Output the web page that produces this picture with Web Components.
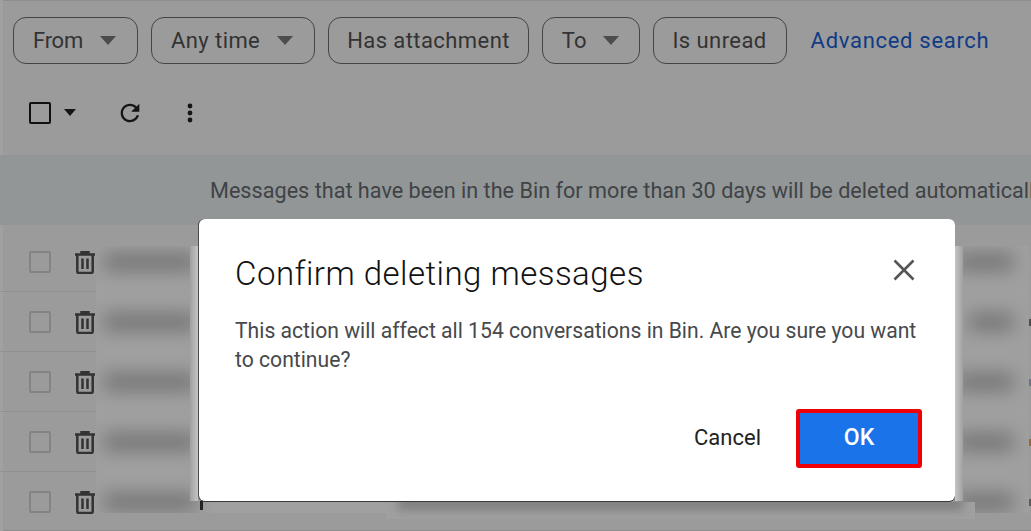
<!DOCTYPE html>
<html>
<head>
<meta charset="utf-8">
<title>Confirm deleting messages</title>
<style>
  html, body { margin: 0; padding: 0; height: 100%; overflow: hidden; background: #9b9b9b; }
</style>
</head>
<body>
<mail-page>
  <filter-bar>
    <filter-chip caret style="letter-spacing:-0.25px">From</filter-chip>
    <filter-chip caret>Any time</filter-chip>
    <filter-chip>Has attachment</filter-chip>
    <filter-chip caret style="letter-spacing:0;padding-right:20px">To</filter-chip>
    <filter-chip style="padding-right:19px">Is unread</filter-chip>
  </filter-bar>
  <mail-toolbar></mail-toolbar>
  <bin-banner>Messages that have been in the Bin for more than 30 days will be deleted automatically</bin-banner>
  <mail-row first></mail-row>
  <mail-row bit="#4a4a4a" narrow="44"></mail-row>
  <mail-row bit="#6b7280"></mail-row>
  <mail-row bit="#8c6a3c"></mail-row>
  <mail-row last bit="#5a5a5a"></mail-row>
  <confirm-dialog heading="Confirm deleting messages">
    This action will affect all 154 conversations in Bin. Are you sure you want to continue?
  </confirm-dialog>
</mail-page>

<script>
const FONT = 'Roboto, "Liberation Sans", sans-serif';

class MailPage extends HTMLElement {
    constructor() {
        super();
        this.attachShadow({ mode: 'open' });
        this.shadowRoot.innerHTML = `
            <style>
                :host {
                    display: block;
                    position: relative;
                    width: 1031px;
                    height: 531px;
                    overflow: hidden;
                    background: #9b9b9b;
                    box-shadow: inset 3px 0 0 #a1a1a4, inset 0 1px 0 #8e8e8e, inset 0 -1px 0 #8e8e8e;
                    font-family: ${FONT};
                }
            </style>
            <slot></slot>
        `;
    }
}

class FilterBar extends HTMLElement {
    constructor() {
        super();
        this.attachShadow({ mode: 'open' });
        this.shadowRoot.innerHTML = `
            <style>
                :host { display: flex; gap: 13px; align-items: center; padding: 17px 0 0 13px; height: 47px; }
                a { margin-left: 11px; color: #0f3a85; font-size: 22px; letter-spacing: 0.7px; text-decoration: none; }
            </style>
            <slot></slot>
            <a>Advanced search</a>
        `;
    }
}

class FilterChip extends HTMLElement {
    constructor() {
        super();
        this.attachShadow({ mode: 'open' });
        const caret = this.hasAttribute('caret')
            ? '<svg width="16" height="9" viewBox="0 0 16 9"><path d="M0 0h16L8 9z" fill="#4c4c4c"/></svg>'
            : '';
        this.shadowRoot.innerHTML = `
            <style>
                :host {
                    display: flex;
                    align-items: center;
                    gap: 17px;
                    box-sizing: border-box;
                    height: 47px;
                    padding: 0 18px;
                    border: 1px solid #454545;
                    border-radius: 13px;
                    color: #333;
                    font-size: 22px;
                    letter-spacing: 0.42px;
                    white-space: nowrap;
                }
                :host([caret]) { padding: 0 21px 0 19px; }
            </style>
            <slot></slot>${caret}
        `;
    }
}

class MailToolbar extends HTMLElement {
    constructor() {
        super();
        this.attachShadow({ mode: 'open' });
        this.shadowRoot.innerHTML = `
            <style>
                :host { display: flex; align-items: center; height: 91px; padding-left: 29px; box-sizing: border-box; padding-top: 6px; }
                .box { box-sizing: border-box; width: 22px; height: 22px; border: 2.5px solid #111; border-radius: 2px; }
                svg { display: block; }
            </style>
            <div class="box"></div>
            <svg style="margin-left:13px" width="12" height="7" viewBox="0 0 12 7"><path d="M0 0h12L6 7z" fill="#151515"/></svg>
            <svg style="margin-left:40px" width="28" height="28" viewBox="0 0 24 24"><path fill="#151515" d="M17.65 6.35C16.2 4.9 14.21 4 12 4c-4.42 0-7.99 3.58-7.99 8s3.57 8 7.99 8c3.73 0 6.84-2.55 7.73-6h-2.08c-.82 2.33-3.04 4-5.65 4-3.31 0-6-2.69-6-6s2.69-6 6-6c1.66 0 3.14.69 4.22 1.78L13 11h7V4l-2.35 2.35z"/></svg>
            <svg style="margin-left:43px" width="6" height="20" viewBox="0 0 6 20"><circle cx="3" cy="3" r="2.4" fill="#151515"/><circle cx="3" cy="10" r="2.4" fill="#151515"/><circle cx="3" cy="17" r="2.4" fill="#151515"/></svg>
        `;
    }
}

class BinBanner extends HTMLElement {
    constructor() {
        super();
        this.attachShadow({ mode: 'open' });
        this.shadowRoot.innerHTML = `
            <style>
                :host {
                    display: flex;
                    align-items: center;
                    box-sizing: border-box;
                    height: 70px;
                    padding: 1px 0 0 210px;
                    background: #929696;
                    color: #3f4346;
                    font-size: 21.65px;
                    white-space: nowrap;
                    overflow: hidden;
                }
            </style>
            <slot></slot>
        `;
    }
}

class MailRow extends HTMLElement {
    constructor() {
        super();
        this.attachShadow({ mode: 'open' });
        const bit = this.getAttribute('bit');
        const narrow = this.getAttribute('narrow') || 56;
        this.shadowRoot.innerHTML = `
            <style>
                :host { display: flex; height: 60px; }
                :host([first]) { margin-top: 7px; }
                .lead {
                    display: flex;
                    align-items: center;
                    gap: 24px;
                    flex: none;
                    box-sizing: border-box;
                    width: 96px;
                    padding: 1px 0 0 29px;
                    border-bottom: 1px solid #909090;
                }
                .box { box-sizing: border-box; width: 22px; height: 22px; border: 2px solid #838383; border-radius: 2px; }
                .patch { flex: 1; display: flex; justify-content: space-between; align-items: center; background: #a0a0a0; overflow: hidden; padding: 0 6px 0 8px; }
                :host([first]) .patch { margin-top: 14px; }
                :host([last]) .patch { margin-bottom: 19px; }
                .smear { height: 18px; background: #757575; filter: blur(9px); }
                .left { width: 92px; }
                .right { width: ${narrow}px; margin-right: 10px; }
                :host([first]) .smear { transform: translateY(-7px); }
                :host([last]) .smear { transform: translateY(9px); }
                .bit { flex: none; width: 2px; height: 7px; align-self: center; }
                svg { display: block; flex: none; }
            </style>
            <div class="lead">
                <div class="box"></div>
                <svg width="20" height="23" viewBox="0 0 20 23" fill="none" stroke="#333" stroke-width="2.5">
                    <path d="M0 3.4h20M6.5 3V1.2h7V3" />
                    <path d="M2.3 4v16.6a1.4 1.4 0 0 0 1.4 1.3h12.6a1.4 1.4 0 0 0 1.4-1.3V4" />
                    <path d="M7.5 7.5v10.5M12.5 7.5v10.5" />
                </svg>
            </div>
            <div class="patch">
                <div class="smear left"></div>
                <div class="smear right"></div>
            </div>
            <div class="bit" style="background:${bit || 'transparent'}"></div>
        `;
    }
}

class ConfirmDialog extends HTMLElement {
    constructor() {
        super();
        this.attachShadow({ mode: 'open' });
        this.shadowRoot.innerHTML = `
            <style>
                :host {
                    position: absolute;
                    left: 199px;
                    top: 219px;
                    width: 756px;
                    height: 282px;
                    box-sizing: border-box;
                    display: flex;
                    flex-direction: column;
                    padding: 32px 36px 33px;
                    background: #fff;
                    border-radius: 6px;
                    box-shadow: -1px 0 0 #4a4a4a, 0 1px 0 #3a3a3a;
                    font-family: ${FONT};
                }
                header { display: flex; justify-content: space-between; align-items: center; height: 44px; }
                h2 { margin: 0; font-size: 33px; font-weight: 300; color: #111; letter-spacing: 0.48px; }
                .close { margin: -7px 4px 0 0; }
                p { margin: 21px 0 0; font-size: 21.15px; line-height: 29px; color: #47494c; }
                footer { margin-top: auto; display: flex; justify-content: flex-end; align-items: center; }
                .cancel { color: #222; font-size: 22px; margin: -2px 35px 0 0; }
                .ok {
                    box-sizing: border-box;
                    width: 126px;
                    height: 59px;
                    margin-right: -3px;
                    padding-bottom: 2px;
                    display: flex;
                    align-items: center;
                    justify-content: center;
                    background: #1a73e8;
                    border: 4px solid #f00006;
                    border-radius: 3px;
                    color: #fff;
                    font-size: 23px;
                    font-weight: 500;
                }
                .glow { position: absolute; width: 8px; top: 27px; bottom: 0; }
                .glow.l { left: -9px; background: linear-gradient(to right, #a0a0a0, #c4c4c4); }
                .glow.r { right: -8px; background: linear-gradient(to left, #a0a0a0, #c4c4c4); }
                .under { position: absolute; left: 187px; right: -20px; top: 100%; height: 17px; margin-top: 1px; overflow: hidden; background: #a0a0a0; }
                .under::before { content: ""; position: absolute; left: 12px; right: 12px; top: -5px; height: 13px; background: #7e7e7e; filter: blur(5px); }
                .nick { position: absolute; left: 1px; top: 100%; width: 3px; height: 9px; background: #222; }
            </style>
            <div class="glow l"></div>
            <div class="glow r"></div>
            <div class="under"></div>
            <div class="nick"></div>
            <header>
                <h2>${this.getAttribute('heading')}</h2>
                <svg class="close" width="22" height="22" viewBox="0 0 22 22"><path d="M1.5 1.5l19 19M20.5 1.5l-19 19" stroke="#555" stroke-width="2.6" fill="none"/></svg>
            </header>
            <p><slot></slot></p>
            <footer>
                <span class="cancel">Cancel</span>
                <div class="ok">OK</div>
            </footer>
        `;
    }
}

customElements.define('mail-page', MailPage);
customElements.define('filter-bar', FilterBar);
customElements.define('filter-chip', FilterChip);
customElements.define('mail-toolbar', MailToolbar);
customElements.define('bin-banner', BinBanner);
customElements.define('mail-row', MailRow);
customElements.define('confirm-dialog', ConfirmDialog);
</script>
</body>
</html>
